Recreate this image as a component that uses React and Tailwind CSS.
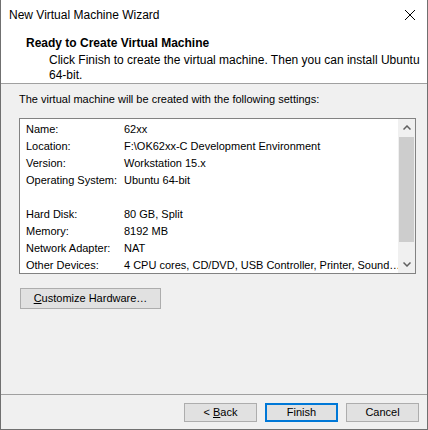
import React from "react";

const rows = [
  ["Name:", "62xx"],
  ["Location:", "F:\\OK62xx-C Development Environment"],
  ["Version:", "Workstation 15.x"],
  ["Operating System:", "Ubuntu 64-bit"],
  ["", ""],
  ["Hard Disk:", "80 GB, Split"],
  ["Memory:", "8192 MB"],
  ["Network Adapter:", "NAT"],
  ["Other Devices:", "4 CPU cores, CD/DVD, USB Controller, Printer, Sound…"],
];

function Btn({ children, primary, className = "" }) {
  return (
    <div
      className={[
        "flex items-center justify-center bg-[#e1e1e1] text-[11px] text-[#000]",
        primary ? "border-2 border-[#0078d7]" : "border border-[#adadad]",
        className,
      ].join(" ")}
    >
      {children}
    </div>
  );
}

export default function App() {
  return (
    <div
      className="flex h-[430px] w-[428px] flex-col border-x border-b border-[#707070] bg-[#f0f0f0] text-[11px] text-black"
      style={{ fontFamily: '"Liberation Sans", Arial, sans-serif' }}
    >
      {/* barra de título + cabeçalho */}
      <div className="flex h-[83px] flex-col bg-white text-[12px]">
        <div className="flex h-[30px] items-center justify-between pl-[8px] pr-[10px]">
          <span className="text-[#000]">New Virtual Machine Wizard</span>
          <svg width="12" height="12" viewBox="0 0 12 12" className="mr-[1px]">
            <path d="M1 1 L11 11 M11 1 L1 11" stroke="#000" strokeWidth="1" />
          </svg>
        </div>
        <div className="pl-[25px] pt-[6px]">
          <div className="font-bold leading-[16px]">Ready to Create Virtual Machine</div>
          <div className="pl-[23px] pt-[2px] leading-[15px]">
            Click Finish to create the virtual machine. Then you can install Ubuntu
            <br />
            64-bit.
          </div>
        </div>
      </div>
      <div className="h-px bg-[#a0a0a0]" />

      <div className="flex flex-1 flex-col px-[18px]">
        <div className="pt-[8px] leading-[15px]">
          The virtual machine will be created with the following settings:
        </div>

        <div className="mt-[11px] flex h-[156px] w-[397px] border border-[#828282] bg-white">
          <div className="flex-1 overflow-hidden pl-[6px] pt-[2px]">
            {rows.map(([k, v], i) => (
              <div key={i} className="flex h-[17px] items-center whitespace-nowrap">
                <span className="w-[98px] shrink-0">{k}</span>
                <span>{v}</span>
              </div>
            ))}
          </div>
          <div className="flex w-[17px] flex-col bg-[#f0f0f0]">
            <div className="flex h-[17px] items-center justify-center">
              <svg width="8" height="5" viewBox="0 0 8 5">
                <path d="M0.5 4.5 L4 1 L7.5 4.5" stroke="#606060" strokeWidth="1.5" fill="none" />
              </svg>
            </div>
            <div className="mx-[1px] mt-[1px] h-[105px] bg-[#cdcdcd]" />
            <div className="flex-1" />
            <div className="flex h-[17px] items-center justify-center">
              <svg width="8" height="5" viewBox="0 0 8 5">
                <path d="M0.5 0.5 L4 4 L7.5 0.5" stroke="#606060" strokeWidth="1.5" fill="none" />
              </svg>
            </div>
          </div>
        </div>

        <Btn className="ml-[1px] mt-[14px] h-[21px] w-[141px]">
          <span>
            <span className="underline">C</span>ustomize Hardware…
          </span>
        </Btn>
      </div>

      <div className="h-px bg-[#a0a0a0]" />
      <div className="flex h-[34px] items-start justify-end gap-[8px] pr-[8px] pt-[8px]">
        <Btn className="h-[19px] w-[73px]">
          <span>
            &lt; <span className="underline">B</span>ack
          </span>
        </Btn>
        <Btn primary className="h-[19px] w-[73px]">
          Finish
        </Btn>
        <Btn className="h-[19px] w-[73px]">Cancel</Btn>
      </div>
    </div>
  );
}
